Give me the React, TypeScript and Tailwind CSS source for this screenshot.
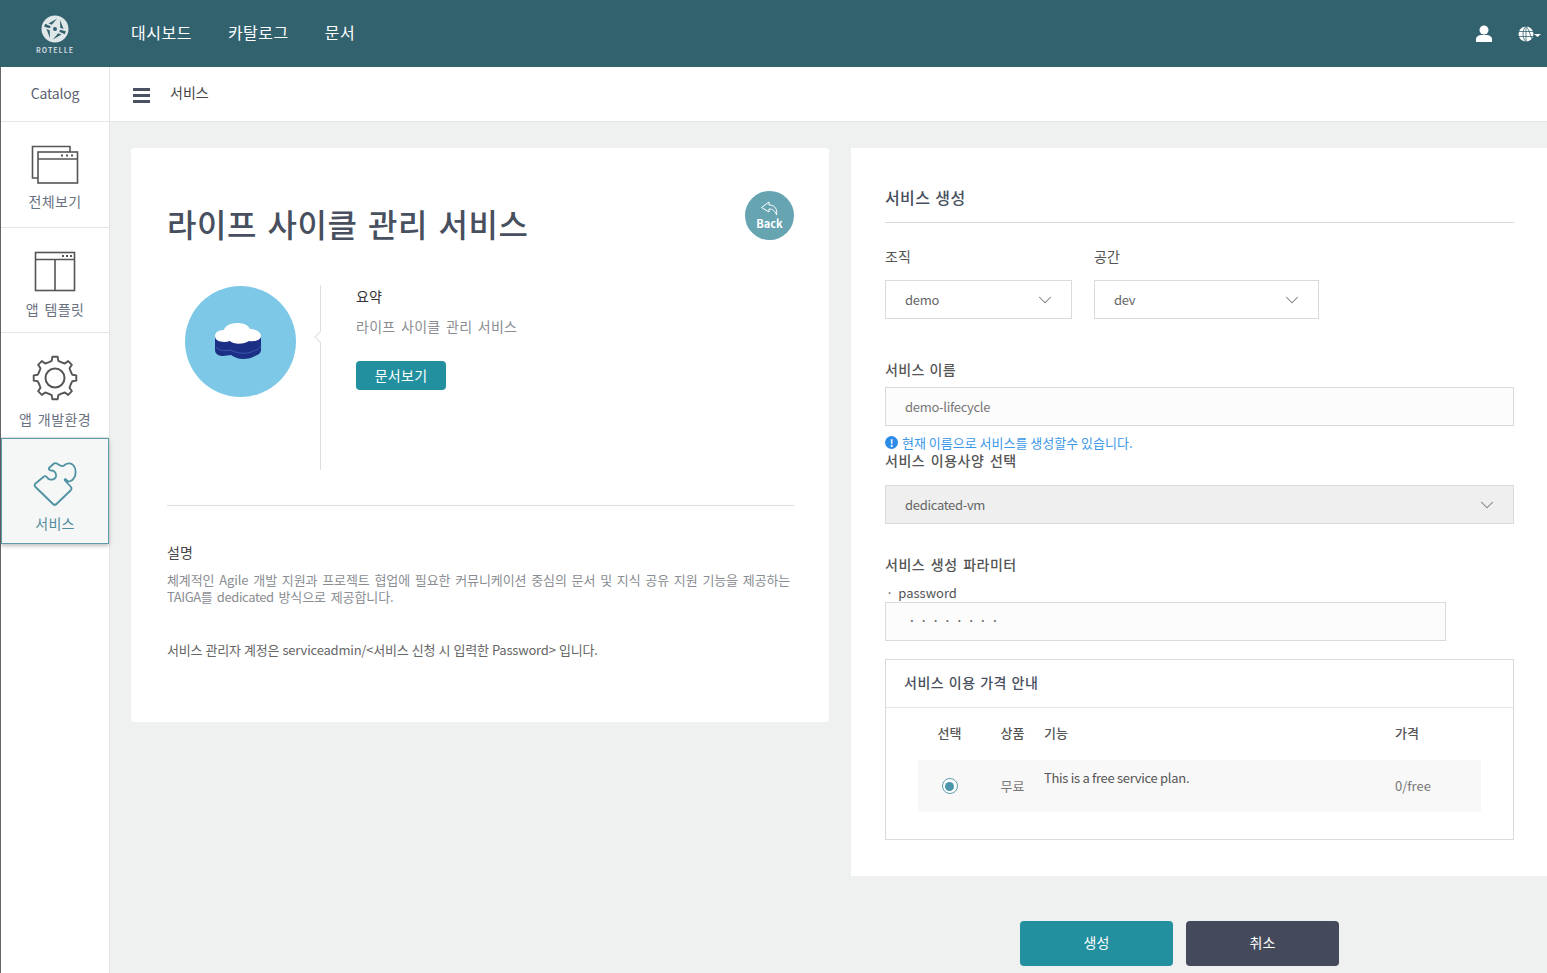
import { ChevronDown } from 'lucide-react'

const font = "font-['Noto_Sans_CJK_KR','Noto_Sans',sans-serif]"

// 톱니 8개짜리 기어 외곽선
const gearPath =
  Array.from({ length: 8 }, (_, i) => {
    const base = (i * 45 * Math.PI) / 180
    const pt = (deg: number, r: number) => {
      const a = base + (deg * Math.PI) / 180
      return `${(23 + r * Math.cos(a)).toFixed(1)} ${(23 + r * Math.sin(a)).toFixed(1)}`
    }
    return `${i === 0 ? 'M' : 'L'}${pt(-22.5, 17)} L${pt(-11, 17.500)} L${pt(-7, 21.500)} L${pt(7, 21.500)} L${pt(11, 17.500)}`
  }).join(' ') + ' Z'

function LogoIcon() {
  return (
    <svg width="30" height="30" viewBox="0 0 30 30" fill="none">
      <circle cx="15" cy="15" r="13.500" fill="#dfe7e9" />
      <g transform="rotate(20 15 15)" fill="#33626f">
        <path d="M13.500 4.500l-3 7.500h-3.500zM16.500 4.500l3 7.500h3.500zM13.500 25.500l-3-7.500h-3.500zM16.500 25.500l3-7.500h3.500z" />
        <path d="M4 13.500l6 .5v2l-6 .5zM26 13.500l-6 .5v2l6 .5z" />
      </g>
      <circle cx="15" cy="15" r="2" fill="#33626f" />
    </svg>
  )
}

function WindowsIcon() {
  return (
    <svg width="48" height="40" viewBox="0 0 48 40" fill="none" stroke="#555" strokeWidth="1.600">
      <path d="M7 33H1.500V1.500H39V7" />
      <rect x="7" y="7" width="39.500" height="31" fill="#fff" />
      <path d="M7 14h39.500" />
      <path d="M30 10.500h2M35 10.500h2M40 10.500h2" strokeWidth="2" />
    </svg>
  )
}

function TemplateIcon() {
  return (
    <svg width="42" height="42" viewBox="0 0 42 42" fill="none" stroke="#555" strokeWidth="1.600">
      <rect x="1.500" y="1.500" width="39" height="38" />
      <path d="M1.500 8.500h39M21 8.500v31" />
      <path d="M28 5h2M32 5h2M36 5h2" strokeWidth="1.800" />
    </svg>
  )
}

function GearIcon() {
  return (
    <svg width="46" height="46" viewBox="0 0 46 46" fill="none" stroke="#555" strokeWidth="1.900" strokeLinejoin="round">
      <path d={gearPath} />
      <circle cx="23" cy="23" r="9.500" strokeWidth="2" />
    </svg>
  )
}

function PuzzleIcon() {
  return (
    <svg width="44" height="44" viewBox="0 0 44 44" fill="none" stroke="#4f93a3" strokeWidth="1.800" strokeLinejoin="round">
      <path d="M2.500 21.500L11 14.500C12.500 13.500 14 15 15 16.500C17 18.500 22 18 23 14.500C23.500 11 21.500 8.500 18.500 8.500C16 8.500 15 7 16.500 5.500L21 1.500C22.500.5 24 1.500 25.500 2.500C27.500 4 29.500 4.500 31 3.500C33.500 1 38 .5 40.500 3.500C43.500 7 43 13 41 16C39 19.500 35 20.500 33.500 18C32.500 16.500 31 17 32 18.500L38 25C39 26.500 38.500 27.500 37.500 28.500L23.500 42C22.500 43 21 43 20 42L2.500 25C1.500 24 1.500 22.500 2.500 21.500Z" />
    </svg>
  )
}

function ReplyIcon() {
  return (
    <svg width="20" height="16" viewBox="0 0 20 16" fill="none" stroke="#fff" strokeWidth="1" strokeLinejoin="round">
      <path d="M9 1L1.500 6.500 9 11V8c3.500 0 6 1.500 7.500 6 1-5-1-10-7.500-10z" />
    </svg>
  )
}

function SideItem({ icon, label, className }: { icon: React.ReactNode; label: string; className: string }) {
  return (
    <div className={`flex flex-col items-center border-b border-[#e4e6e6] text-[#6a7180] ${className}`}>
      {icon}
      <span className="text-sm leading-5 tracking-[0.4px] [word-spacing:2px]">{label}</span>
    </div>
  )
}

function Select({ value, className }: { value: string; className: string }) {
  return (
    <div className={`flex h-[39px] items-center justify-between border border-[#d7dbdd] pl-[19px] pr-[15px] text-[13px] tracking-[-0.3px] text-[#666] ${className}`}>
      <span>{value}</span>
      <ChevronDown size={22} strokeWidth={1.100} color="#777" />
    </div>
  )
}

export default function App() {
  return (
    <div className={`flex h-[973px] w-[1547px] flex-col overflow-hidden bg-[#eff1f1] ${font}`}>
      {/* 헤더 */}
      <header className="flex h-[67px] shrink-0 items-center bg-[#33626f] text-white">
        <div className="flex w-[110px] flex-col items-center">
          <LogoIcon />
          <span className="mt-[2px] text-[7px] font-bold leading-[8px] tracking-[1px] text-[#c9d6da]">ROTELLE</span>
        </div>
        <nav className="mb-[4px] ml-[21px] flex gap-9 text-base tracking-[0.5px]">
          <span>대시보드</span>
          <span>카탈로그</span>
          <span>문서</span>
        </nav>
        <div className="ml-auto flex items-center gap-[25px] pr-[5px]">
          <svg width="18" height="17" viewBox="0 0 18 17" fill="#fff">
            <circle cx="9" cy="5" r="4.500" />
            <path d="M1 17v-3c0-2 2-3.500 4.500-4h7c2.500.5 4.500 2 4.500 4v3z" />
          </svg>
          <svg width="24" height="16" viewBox="0 0 24 16" fill="none">
            <circle cx="8" cy="8" r="7.500" fill="#fff" />
            <path d="M0 5.500h16M0 10.500h16M8 0v16M8 0C4 4 4 12 8 16M8 0c4 4 4 12 8 16" stroke="#33626f" strokeWidth="0.800" />
            <path d="M16 8h7l-3.500 3z" fill="#fff" />
          </svg>
        </div>
      </header>

      <div className="flex min-h-0 flex-1 border-l border-[#666]">
        {/* 사이드바 */}
        <aside className="flex w-[109px] shrink-0 flex-col border-r border-[#e4e6e6] bg-white">
          <div className="flex h-[55px] shrink-0 items-center justify-center border-b border-[#e4e6e6] pb-[2px] text-sm tracking-[-0.2px] text-[#5b6270]">
            Catalog
          </div>
          <SideItem icon={<WindowsIcon />} label="전체보기" className="h-[106px] gap-[6px] pt-[23px]" />
          <SideItem icon={<TemplateIcon />} label="앱 템플릿" className="h-[105px] gap-[6px] pt-[23px]" />
          <SideItem icon={<GearIcon />} label="앱 개발환경" className="h-[105px] gap-[8px] pt-[22px]" />
          <div className="flex h-[106px] flex-col items-center gap-[7px] border border-[#5f9caa] bg-[#f5f6f6] pt-[23px] text-[#4f8c9b] shadow-[0_2px_4px_rgba(0,0,0,0.25)]">
            <PuzzleIcon />
            <span className="text-sm leading-5 tracking-[0.3px]">서비스</span>
          </div>
        </aside>

        <div className="flex min-w-0 flex-1 flex-col">
          <div className="flex h-[55px] shrink-0 items-center gap-[20px] border-b border-[#e4e6e6] bg-white pb-1 pl-[23px] text-sm text-[#444]">
            <span className="mt-[6px] flex w-[17px] flex-col gap-[3px]">
              <span className="h-[3px] bg-[#4a5160]" />
              <span className="h-[3px] bg-[#4a5160]" />
              <span className="h-[3px] bg-[#4a5160]" />
            </span>
            <span>서비스</span>
          </div>

          <div className="flex flex-1 items-start gap-[22px] pl-[21px] pt-[26px]">
            {/* 서비스 요약 */}
            <section className="h-[574px] w-[698px] shrink-0 rounded-sm bg-white pl-[36px] pr-[35px] pt-[43px]">
              <div className="flex items-start justify-between">
                <h1 className="mt-[10px] text-[32px] font-medium leading-[44px] tracking-[0.5px] text-[#484f5e] [word-spacing:3px]">라이프 사이클 관리 서비스</h1>
                <div className="mb-[11px] flex h-[49px] w-[49px] flex-col items-center justify-center rounded-full bg-[#66a4b2] pb-[2px] text-white">
                  <ReplyIcon />
                  <span className="text-[11px] font-bold leading-3">Back</span>
                </div>
              </div>
              <div className="mt-[34px] flex h-[185px] items-start">
                <div className="ml-[18px] mt-[1px] flex h-[111px] w-[111px] items-center justify-center rounded-full bg-[#7cc8e6]">
                  <svg width="48" height="38" viewBox="0 0 48 38" className="mr-[5px]">
                    <path d="M1 13v14c0 4 4 6 8 6 3 0 5-1 8-1 3 2 7 4 12 4 5 0 9-1 12-3 3-1 6-3 6-6V12z" fill="#1b2f85" />
                    <path d="M2 24c3 4 10 4 15 3 4 3 15 5 23 1 3-1 6-3 7-5" stroke="#3a55b0" strokeWidth="1" fill="none" />
                    <path d="M1 13c0-4 4-6 9-6 1-4 6-7 13-7 7 0 11 2 13 6 5 0 11 3 11 7 0 4-6 6-12 5-4 3-15 4-19 0-6 2-15 1-15-5z" fill="#fff" />
                  </svg>
                </div>
                <div className="relative ml-[24px] h-[185px] border-l border-[#dcdfe0] pl-[35px] pt-[1px]">
                  <div className="absolute -left-[5px] top-[48px] h-2 w-2 rotate-45 border-b border-l border-[#dcdfe0] bg-white" />
                  <div className="text-sm leading-5 text-[#333]">요약</div>
                  <div className="mt-[10px] text-sm leading-5 tracking-[0.3px] text-[#8a8d92] [word-spacing:2px]">라이프 사이클 관리 서비스</div>
                  <button className="mt-[25px] h-[29px] w-[90px] rounded-sm bg-[#23909f] pb-[1px] text-sm tracking-[0.3px] text-white">문서보기</button>
                </div>
              </div>
              <div className="mt-[35px] border-t border-[#dcdfe0] pt-[36px]">
                <div className="text-sm leading-5 text-[#444]">설명</div>
                <p className="mt-[9px] whitespace-nowrap text-[13px] leading-[17px] tracking-[-0.1px] text-[#8a8d92] [word-spacing:2px]">
                  체계적인 Agile 개발 지원과 프로젝트 협업에 필요한 커뮤니케이션 중심의 문서 및 지식 공유 지원 기능을 제공하는
                  <br />
                  <span className="tracking-[-0.4px]">TAIGA를 dedicated</span> 방식으로 제공합니다.
                </p>
                <p className="mt-[36px] whitespace-nowrap text-[13px] leading-[17px] tracking-[-0.2px] text-[#666] [word-spacing:0.5px]">
                  서비스 관리자 계정은 serviceadmin/&lt;서비스 신청 시 입력한 Password&gt; 입니다.
                </p>
              </div>
            </section>

            <div className="flex min-w-0 flex-1 flex-col items-stretch">
              {/* 서비스 생성 폼 */}
              <section className="h-[728px] bg-white pl-[34px] pr-[33px] pt-[37px]">
                <h2 className="border-b border-[#d7dbdd] pb-[13px] text-base font-medium leading-[24px] tracking-[0.4px] text-[#484f5e] [word-spacing:1px]">서비스 생성</h2>
                <div className="mt-[22px] flex gap-[22px]">
                  <div className="w-[187px]">
                    <div className="mb-[13px] text-sm leading-[22px] text-[#555]">조직</div>
                    <Select value="demo" className="" />
                  </div>
                  <div className="w-[225px]">
                    <div className="mb-[13px] text-sm leading-[22px] text-[#555]">공간</div>
                    <Select value="dev" className="" />
                  </div>
                </div>
                <div className="mt-[39px] text-sm font-medium leading-[22px] tracking-[0.4px] text-[#555] [word-spacing:1px]">서비스 이름</div>
                <div className="mt-[7px] flex h-[39px] items-center border border-[#d7dbdd] bg-[#fcfcfc] pl-[19px] text-[13px] tracking-[-0.3px] text-[#777]">demo-lifecycle</div>
                <div className="mt-[9px] flex items-center gap-[4px] text-[13px] leading-[15px] text-[#3b97e8]">
                  <span className="flex h-[13px] w-[13px] items-center justify-center rounded-full bg-[#2a8ce8] text-[10px] font-bold leading-none text-white">!</span>
                  <span>현재 이름으로 서비스를 생성할수 있습니다.</span>
                </div>
                <div className="text-sm font-medium leading-[20px] tracking-[0.5px] text-[#555] [word-spacing:2px]">서비스 이용사양 선택</div>
                <Select value="dedicated-vm" className="mt-[15px] bg-[#efefef]" />
                <div className="mt-[30px] text-sm font-medium leading-[20px] tracking-[0.5px] text-[#555] [word-spacing:2px]">서비스 생성 파라미터</div>
                <div className="mt-[10px] pl-[1px] text-[13px] leading-[18px] text-[#555]">
                  <span className="mr-[5px]">·</span>password
                </div>
                <div className="flex h-[39px] w-[561px] items-center border border-[#d7dbdd] bg-[#fcfcfc] pb-[4px] pl-[22px] text-sm tracking-[4px] text-[#666]">········</div>
                <div className="mt-[18px] h-[181px] border border-[#d7dbdd]">
                  <div className="flex h-[48px] items-center border-b border-[#e4e6e6] pb-[3px] pl-[18px] text-sm font-medium tracking-[0.5px] text-[#484f5e] [word-spacing:1px]">서비스 이용 가격 안내</div>
                  <div className="mx-[32px] mt-[15px] grid grid-cols-[63px_63px_351px_1fr] text-[13px] leading-5 text-[#555]">
                    <span className="text-center font-medium">선택</span>
                    <span className="text-center font-medium">상품</span>
                    <span className="font-medium">기능</span>
                    <span className="font-medium">가격</span>
                  </div>
                  <div className="mx-[32px] mt-[17px] grid h-[52px] grid-cols-[63px_63px_351px_1fr] items-center bg-[#f8f8f8] text-[13px] text-[#777]">
                    <span className="flex justify-center">
                      <span className="flex h-[16px] w-[16px] items-center justify-center rounded-full border border-[#5f9caa] bg-white">
                        <span className="h-[9px] w-[9px] rounded-full bg-[#4a97ab]" />
                      </span>
                    </span>
                    <span className="text-center">무료</span>
                    <span className="mb-4 tracking-[-0.3px] text-[#555]">This is a free service plan.</span>
                    <span>0/free</span>
                  </div>
                </div>
              </section>
              <div className="mt-[45px] flex gap-[13px] pl-[169px]">
                <button className="h-[45px] w-[153px] rounded-sm bg-[#23909f] pb-1 text-sm text-white">생성</button>
                <button className="h-[45px] w-[153px] rounded-sm bg-[#444a5c] pb-1 text-sm text-white">취소</button>
              </div>
            </div>
          </div>
        </div>
      </div>
    </div>
  )
}
